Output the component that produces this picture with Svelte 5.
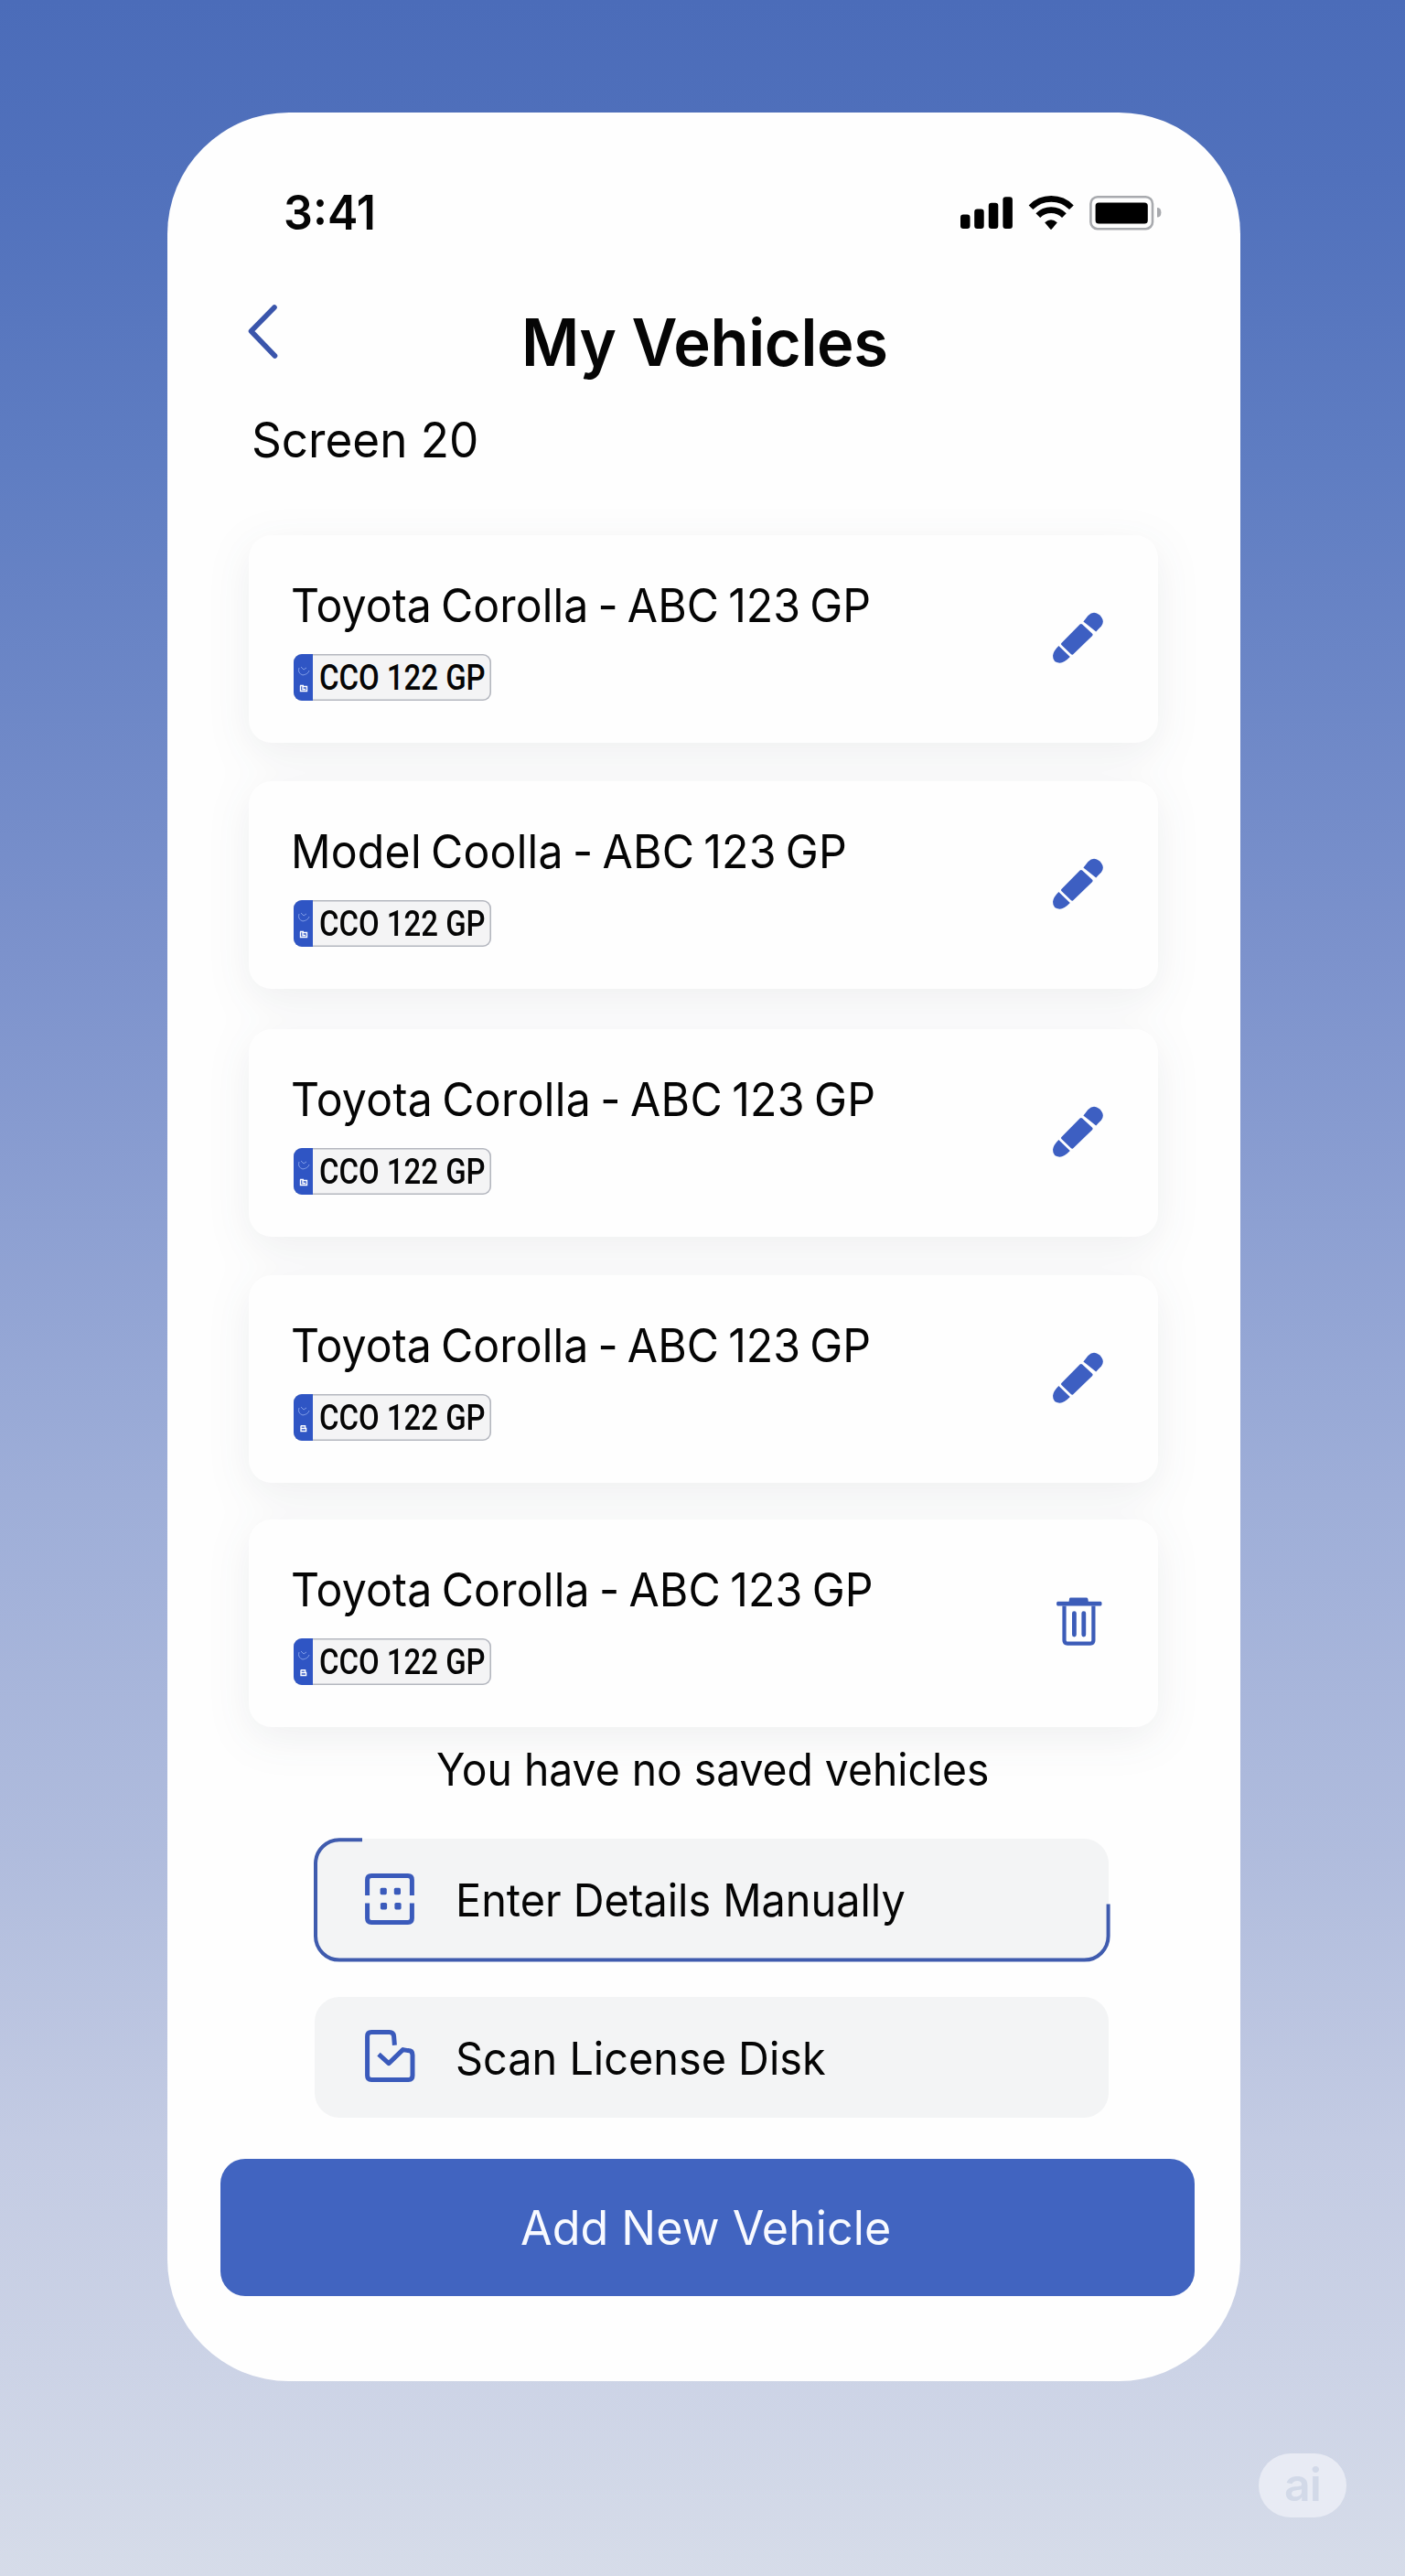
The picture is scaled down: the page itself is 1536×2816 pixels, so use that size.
<script>
  const crest = 'M7 34.5 H11 M7.5 34.5 V40.5 H14.5 V35.5 H10 V38.5 H13';
  const letter = 'M8 34.5 V40.5 H13.6 V37.5 H8 M8 34.8 H12.6 V37.5';
  const vehicles = [
    { name: 'Toyota Corolla - ABC 123 GP', plate: 'CCO 122 GP', mark: crest, action: 'edit' },
    { name: 'Model Coolla - ABC 123 GP', plate: 'CCO 122 GP', mark: crest, action: 'edit' },
    { name: 'Toyota Corolla - ABC 123 GP', plate: 'CCO 122 GP', mark: crest, action: 'edit' },
    { name: 'Toyota Corolla - ABC 123 GP', plate: 'CCO 122 GP', mark: letter, action: 'edit' },
    { name: 'Toyota Corolla - ABC 123 GP', plate: 'CCO 122 GP', mark: letter, action: 'delete' },
  ];
</script>

<div class="page">
  <main class="phone">
    <div class="status">
      <span class="time">3:41</span>
      <svg class="signals" width="220" height="40" viewBox="0 0 220 40">
        <rect x="0" y="21.5" width="10.5" height="15.5" rx="3.2" />
        <rect x="15.2" y="15.5" width="10.5" height="21.5" rx="3.2" />
        <rect x="30.8" y="8.7" width="10.5" height="28.3" rx="3.2" />
        <rect x="46.4" y="2.2" width="10.5" height="34.8" rx="3.2" />
        <g fill="none" stroke="#000" stroke-width="6.6">
          <path d="M77 13.7 A31 31 0 0 1 121.4 13.7" />
          <path d="M84.8 22.6 A20 20 0 0 1 113.4 22.6" />
        </g>
        <path d="M92.2 30.2 Q99 24.2 105.8 30.2 L99.8 37.4 Q99 38.2 98.2 37.4 Z" />
        <rect x="142.4" y="2.2" width="67.6" height="35" rx="7.5" fill="none" stroke="#a8aaae" stroke-width="2.6" />
        <rect x="147.6" y="8.4" width="57.2" height="23.2" rx="3.6" />
        <path d="M215 14 Q219.4 14 219.4 19.3 Q219.4 24.6 215 24.6 Z" fill="#a8aaae" />
      </svg>
    </div>

    <header>
      <svg class="back" width="36" height="60" viewBox="0 0 36 60">
        <path d="M30 4 L4.5 30 L30.5 57" />
      </svg>
      <h1>My Vehicles</h1>
    </header>
    <p class="screen">Screen 20</p>

    <ul class="list">
      {#each vehicles as v}
        <li class="card">
          <div class="info">
            <span class="name">{v.name}</span>
            <span class="plate">
              <svg class="band" width="21" height="51" viewBox="0 0 21 51">
                <rect width="21" height="51" fill="#2f55c4" />
                <g fill="none" stroke="#7f9be6" stroke-width="1">
                  <path d="M6 15 Q4 21 10 23 Q16 22 17 18" />
                  <path d="M8 14 L11 17 L14 15" />
                </g>
                <path d={v.mark} fill="none" stroke="#fff" stroke-width="1.4" />
              </svg>
              <span class="reg"><span class="regtext">{v.plate}</span></span>
            </span>
          </div>
          {#if v.action === 'edit'}
            <svg class="edit" width="56" height="56" viewBox="0 0 56 56">
              <path d="M33.4 10.4 L38.5 4 Q44.5 -2 51 3.2 Q57.5 9.5 53 15.5 L47.2 21.4 Z" />
              <path d="M29.6 13.6 Q30.9 12.4 32.2 13.6 L43.2 23.8 Q44.2 24.9 43.2 26 L22 46.4 Q21 47.2 20 46.3 L9.4 36 Q8.4 35 9.4 34 Z" />
              <path d="M6.4 37 L18.8 49 Q12.5 55.6 7.4 55.7 Q0 55.4 0 47.8 Q0.4 43 6.4 37 Z" />
            </svg>
          {:else}
            <svg class="trash" width="50" height="54" viewBox="0 0 50 54">
              <path d="M15 0.4 H33 Q34.2 0.4 34.4 2 L34.8 4.8 H48.4 Q49.6 5 49.6 7 Q49.6 9.2 48.4 9.4 H1.2 Q0 9.2 0 7 Q0 5 1.2 4.8 H13.6 L14 2 Q14 0.4 15 0.4 Z" />
              <path d="M8.5 9.4 V47 Q8.5 50.6 12 50.6 H37 Q40.4 50.6 40.4 47 V9.4" fill="none" stroke="#3c5cb8" stroke-width="4.2" />
              <path d="M19.4 17.6 V41 M29.8 17.6 V41" fill="none" stroke="#3c5cb8" stroke-width="4.8" stroke-linecap="round" />
            </svg>
          {/if}
        </li>
      {/each}
    </ul>

    <p class="empty">You have no saved vehicles</p>

    <div class="options">
      <button class="option">
        <svg class="outline" width="871" height="136" viewBox="0 0 871 136">
          <path d="M53 2.2 H28 A26 26 0 0 0 2 28 V107.6 A26 26 0 0 0 28 133.6 H842.6 A26 26 0 0 0 868.6 107.6 V72.5" />
        </svg>
        <svg class="icon keypad" width="55" height="58" viewBox="0 0 55 58">
          <path d="M2.6 24 V7 Q2.6 2.6 7 2.6 H47 Q51.4 2.6 51.4 7 V24 M2.6 32.5 V49 Q2.6 53.5 7 53.5 H47 Q51.4 53.5 51.4 49 V32.5" />
          <g class="dots">
            <rect x="16.6" y="15.8" width="7.2" height="7.4" rx="1.6" />
            <rect x="31.8" y="15.8" width="7.2" height="7.4" rx="1.6" />
            <rect x="16.9" y="32" width="7.2" height="7.4" rx="1.6" />
            <rect x="32.4" y="32" width="7.2" height="7.4" rx="1.6" />
          </g>
        </svg>
        <span class="label">Enter Details Manually</span>
      </button>
      <button class="option">
        <svg class="icon disk" width="55" height="58" viewBox="0 0 55 58">
          <path d="M32.4 16.8 L31.6 7 Q31.2 2.6 26.6 2.6 H7 Q2.6 2.6 2.6 7 V50 Q2.6 54.4 7 54.4 H47.6 Q52 54.4 52 50 V27.5 Q52 22.6 47 22.6 L41.5 21.6 L26 36.6 L15 26.6" />
        </svg>
        <span class="label">Scan License Disk</span>
      </button>
    </div>

    <button class="add"><span class="addtext">Add New Vehicle</span></button>
  </main>
  <div class="badge">ai</div>
</div>

<style>
  :global(body) {
    margin: 0;
  }
  .page {
    position: relative;
    box-sizing: border-box;
    width: 1536px;
    height: 2816px;
    padding: 123px 0 0 183px;
    overflow: hidden;
    font-family: Inter, 'Liberation Sans', sans-serif;
    color: #050505;
    background: linear-gradient(180deg, #4b6cb9 0%, #5171bc 7%, #5f7dc2 18%, #7c92cc 37%, #9eaed8 58%, #b0bcdd 72%, #c3cbe3 83%, #ccd3e6 92%, #d6dce9 100%);
  }
  .phone {
    display: flex;
    flex-direction: column;
    box-sizing: border-box;
    width: 1172.5px;
    height: 2480px;
    border-radius: 133px;
    background: #fefefe;
    overflow: hidden;
  }
  .time,
  h1,
  .screen,
  .name,
  .regtext,
  .empty,
  .label,
  .addtext {
    display: inline-block;
    transform-origin: left;
    white-space: nowrap;
  }
  .status {
    display: flex;
    justify-content: space-between;
    align-items: flex-start;
    height: 209px;
    padding: 0 86px 0 127px;
    box-sizing: border-box;
  }
  .time {
    margin-top: 79px;
    font-size: 52.5px;
    line-height: 60px;
    font-weight: 580;
    transform: scaleX(0.955);
  }
  .signals {
    margin-top: 90px;
  }
  header {
    display: flex;
    align-items: flex-start;
    height: 120px;
    padding-left: 87px;
  }
  .back {
    flex: none;
  }
  .back path {
    fill: none;
    stroke: #3a55ab;
    stroke-width: 5.6;
    stroke-linecap: round;
    stroke-linejoin: round;
  }
  h1 {
    margin: 1px 0 0 264px;
    font-size: 71px;
    line-height: 82px;
    font-weight: 600;
    letter-spacing: -0.4px;
    transform: scaleX(0.968);
  }
  p {
    margin: 0;
  }
  .screen {
    height: 58px;
    margin: 0 0 75px 92px;
    font-size: 53.5px;
    line-height: 58px;
    transform: scaleX(0.957);
  }
  .list {
    display: flex;
    flex-direction: column;
    gap: 42px;
    margin: 0;
    padding: 0 0 0 89px;
    list-style: none;
    filter: drop-shadow(0 12px 23px rgba(40, 50, 70, 0.075));
  }
  .card {
    display: flex;
    justify-content: space-between;
    align-items: flex-start;
    box-sizing: border-box;
    width: 993.5px;
    height: 227px;
    padding: 47px 59px 0 46px;
    border-radius: 25px;
    background: #fefefe;
  }
  .card:nth-child(3) {
    margin-top: 2px;
  }
  .card:nth-child(5) {
    margin-top: -2px;
  }
  .info {
    display: flex;
    flex-direction: column;
    align-items: flex-start;
    gap: 23px;
  }
  .name {
    font-size: 51px;
    line-height: 60px;
    letter-spacing: 0.1px;
    word-spacing: -3.8px;
    transform: scaleX(0.945);
  }
  .card:nth-child(2) .name {
    letter-spacing: 0.23px;
  }
  .card:nth-child(3) .name {
    letter-spacing: 0.3px;
  }
  .card:nth-child(5) .name {
    letter-spacing: 0.2px;
  }
  .plate {
    display: flex;
    box-sizing: border-box;
    width: 216px;
    height: 51px;
    margin-left: 3px;
    border-radius: 9px;
    background: #f4f4f5;
    box-shadow: inset 0 0 0 1.6px #b4b7bf;
    overflow: hidden;
  }
  .band {
    flex: none;
  }
  .reg {
    width: 195px;
    padding-left: 7px;
    font-family: Roboto, sans-serif;
    font-size: 38.5px;
    line-height: 51px;
    font-weight: 500;
    white-space: nowrap;
  }
  .regtext {
    transform: scaleX(0.855);
  }
  .edit {
    margin-top: 37px;
    fill: #3d5fc2;
  }
  .trash {
    margin: 38px 2px 0 0;
    fill: #3c5cb8;
  }
  .empty {
    height: 60px;
    margin: 17px 0 44px 294px;
    font-size: 49px;
    line-height: 60px;
    transform: scaleX(0.944);
  }
  .options {
    display: flex;
    flex-direction: column;
    gap: 41px;
    padding: 1px 0 0 161px;
  }
  button {
    border: 0;
    color: inherit;
    font-family: inherit;
    text-align: left;
  }
  .option {
    position: relative;
    display: flex;
    align-items: flex-start;
    box-sizing: border-box;
    width: 868px;
    height: 132px;
    padding: 37px 0 0 55px;
    border-radius: 27px;
    background: #f3f4f5;
  }
  .outline {
    position: absolute;
    left: -1.3px;
    top: -0.9px;
  }
  .outline path {
    fill: none;
    stroke: #3f5bae;
    stroke-width: 4;
  }
  .icon {
    flex: none;
  }
  .icon path {
    fill: none;
    stroke: #3a5abb;
    stroke-width: 5;
    stroke-linejoin: round;
  }
  .keypad {
    margin-top: 1px;
  }
  .disk {
    margin-top: -1px;
  }
  .dots {
    fill: #3a5abb;
  }
  .label {
    margin-left: 44px;
    font-size: 49.5px;
    line-height: 60px;
    transform: scaleX(0.946);
  }
  .add {
    box-sizing: border-box;
    width: 1065px;
    height: 150px;
    margin: 45px 0 0 58px;
    padding: 1px 0 0 328px;
    border-radius: 27px;
    background: #4164c0;
    color: #f8faff;
    font-size: 52px;
    line-height: 149px;
  }
  .addtext {
    transform: scaleX(0.966);
  }
  .badge {
    position: absolute;
    left: 1376px;
    top: 2682px;
    width: 96px;
    height: 70px;
    border-radius: 35px;
    background: #e8ebf4;
    color: #d2d9e8;
    font-size: 50px;
    line-height: 68px;
    font-weight: 600;
    letter-spacing: -1px;
    text-align: center;
  }
</style>
